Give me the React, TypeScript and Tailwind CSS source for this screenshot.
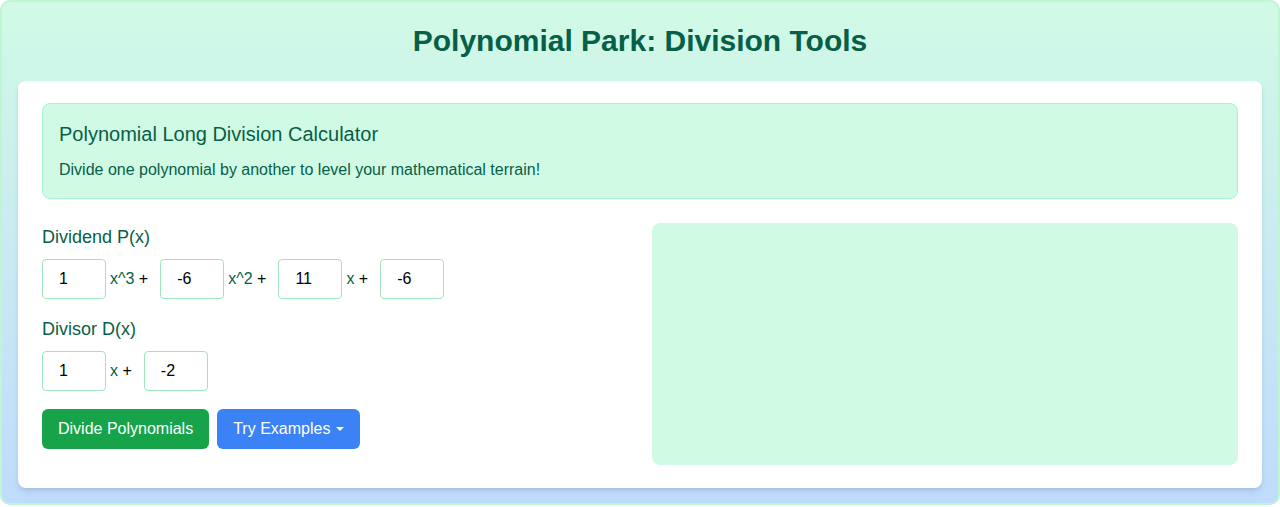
import { useState } from "react";

function CoefInput({ value }: { value: string }) {
  return (
    <input
      type="text"
      defaultValue={value}
      className="w-16 h-10 rounded border border-[#9ee6bd] bg-white px-4 text-base text-black outline-none"
    />
  );
}

function Term({ power }: { power: string }) {
  return (
    <span className="ml-1 mr-3 text-base">
      <span className="text-[#065f46]">{power}</span>
      <span className="text-black"> +</span>
    </span>
  );
}

export default function App() {
  const [dividend] = useState(["1", "-6", "11", "-6"]);
  const [divisor] = useState(["1", "-2"]);

  return (
    <div
      className="rounded-[10px] border-2 border-[#bbf7d0] bg-linear-to-b from-[#d1fae5] to-[#bfdbfe] px-4 pt-[21px] pb-[15px]"
      style={{ fontFamily: '"Liberation Sans", Arial, sans-serif' }}
    >
      <h1 className="mb-[22px] text-center text-3xl leading-9 font-bold text-[#065f46]">
        Polynomial Park: Division Tools
      </h1>

      <div className="rounded-lg bg-white px-6 pt-[22px] pb-[23px] shadow-md">
        <div className="mb-6 rounded-lg border border-[#a7f3d0] bg-[#d1fae5] p-4">
          <h2 className="mb-2.5 text-xl leading-7 text-[#065f46]">
            Polynomial Long Division Calculator
          </h2>
          <p className="text-base leading-6 text-[#065f46]">
            Divide one polynomial by another to level your mathematical terrain!
          </p>
        </div>

        <div className="grid grid-cols-2 gap-6">
          <div>
            <label className="mb-2 block text-lg leading-7 text-[#065f46]">Dividend P(x)</label>
            <div className="mb-4 flex items-center">
              <CoefInput value={dividend[0]} />
              <Term power="x^3" />
              <CoefInput value={dividend[1]} />
              <Term power="x^2" />
              <CoefInput value={dividend[2]} />
              <Term power="x" />
              <CoefInput value={dividend[3]} />
            </div>

            <label className="mb-2 block text-lg leading-7 text-[#065f46]">Divisor D(x)</label>
            <div className="flex items-center">
              <CoefInput value={divisor[0]} />
              <Term power="x" />
              <CoefInput value={divisor[1]} />
            </div>

            <div className="mt-[18px] flex gap-2">
              <button className="h-10 rounded-md bg-[#16a34a] px-4 text-base text-white">
                Divide Polynomials
              </button>
              <button className="flex h-10 items-center rounded-md bg-[#3b82f6] px-4 text-base text-white">
                Try Examples
                <span className="ml-1.5 h-0 w-0 border-x-[4px] border-t-[4px] border-x-transparent border-t-white" />
              </button>
            </div>
          </div>

          <div className="min-h-[242px] rounded-lg border border-[#d1fae5] bg-[#d1fae5]" />
        </div>
      </div>
    </div>
  );
}
